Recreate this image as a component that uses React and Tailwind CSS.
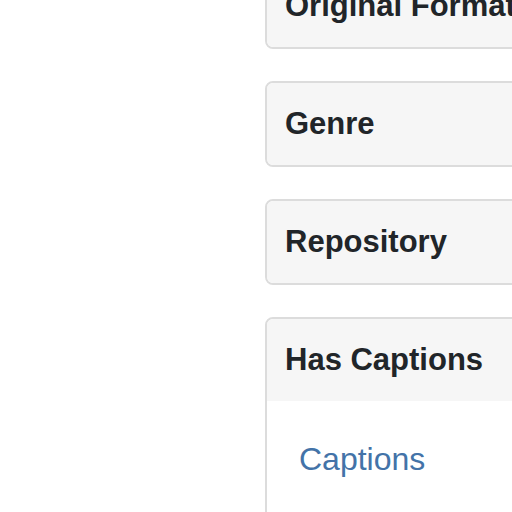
export default function App() {
  const font = { fontFamily: '"Liberation Sans", Arial, sans-serif' };
  const Head = ({ children }) => (
    <div className="h-[82px] flex items-center pl-[18px] pt-[1px] bg-[#f6f6f6] text-[31px] font-bold text-[#212529] whitespace-nowrap">
      {children}
    </div>
  );
  return (
    <div className="w-[512px] h-[512px] overflow-hidden bg-white" style={font}>
      <div className="ml-[265px] w-[420px] -mt-[37px] flex flex-col gap-[32px]">
        <div className="border-2 border-[#dcdcdc] rounded-[8px] overflow-hidden">
          <Head>Original Format</Head>
        </div>
        <div className="border-2 border-[#dcdcdc] rounded-[8px] overflow-hidden">
          <Head>Genre</Head>
        </div>
        <div className="border-2 border-[#dcdcdc] rounded-[8px] overflow-hidden">
          <Head>Repository</Head>
        </div>
        <div className="border-2 border-[#dcdcdc] rounded-[8px] overflow-hidden">
          <Head>Has Captions</Head>
          <div className="bg-white pt-[38px] pl-[32px] pb-[60px]">
            <a className="text-[32px] leading-[40px] text-[#4373a8]">Captions</a>
          </div>
        </div>
      </div>
    </div>
  );
}
